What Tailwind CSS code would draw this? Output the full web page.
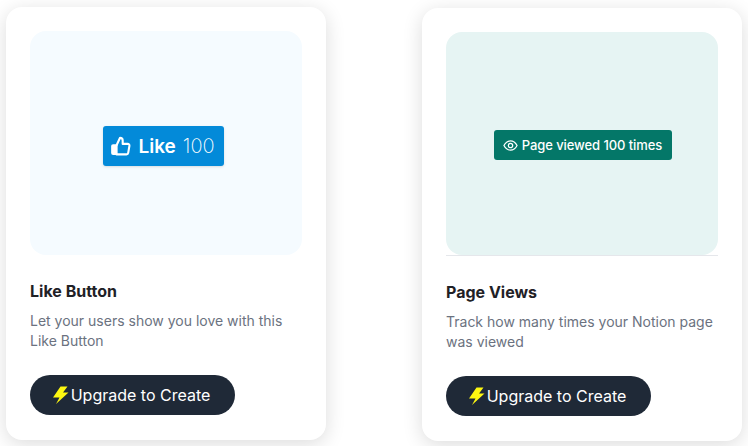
<!DOCTYPE html>
<html>
<head>
<meta charset="utf-8">
<script src="https://cdn.jsdelivr.net/npm/@tailwindcss/browser@4"></script>
</head>
<body class="bg-white overflow-hidden font-['Inter',sans-serif]">
<div class="flex items-start gap-[96px] pl-[6px] pt-[7px] h-[446px] w-[748px] overflow-hidden">
  <div class="w-[320px] h-[433px] bg-white rounded-2xl shadow-[0_4px_20px_rgba(0,0,0,0.14)] p-6 flex flex-col">
    <div class="h-[224px] shrink-0 rounded-2xl bg-[#f5fbff] flex items-center justify-center">
      <div class="w-[121px] h-[40px] mr-[6px] mt-[6px] pr-[1px] bg-[#038ad9] rounded-[3px] shadow-sm flex items-center justify-center gap-[6px] text-white">
        <svg class="w-[21px] h-[21px] mr-[1px] shrink-0" viewBox="0 0 24 24" fill="none" stroke="white" stroke-width="2.4" stroke-linecap="round" stroke-linejoin="round"><path d="M7.5 10.5v10H3.5a1 1 0 0 1-1-1v-8a1 1 0 0 1 1-1z" fill="white"/><path d="M7.5 10.5l4-8.5a3 3 0 0 1 3 3v4h5.7a2 2 0 0 1 2 2.3l-1.4 8a2 2 0 0 1-2 1.7H7.5"/></svg>
        <span class="text-[19px] font-semibold leading-none">Like</span>
        <span class="text-[20px] font-extralight leading-none ml-[1px]">100</span>
      </div>
    </div>
    <h3 class="mt-[26px] text-base leading-[20px] font-bold text-[#1f2126]">Like Button</h3>
    <p class="mt-[10px] text-sm leading-[20px] text-[#6b7280]">Let your users show you love with this Like Button</p>
    <button class="mt-6 w-[205px] h-[40px] pr-[2px] rounded-full bg-[#1f2937] text-white text-base flex items-center justify-center">
      <svg class="w-[18px] h-[18px] shrink-0" viewBox="0 0 18 18"><path d="M7.5 0.5 L14.5 0.5 L10 6.5 H15.5 L3 18 L6.5 11.5 H0 Z" fill="#fdf711"/></svg>
      <span>Upgrade to Create</span>
    </button>
  </div>
  <div class="w-[320px] h-[433px] mt-[1px] bg-white rounded-2xl shadow-[0_4px_20px_rgba(0,0,0,0.14)] p-6 flex flex-col">
    <div class="h-[224px] shrink-0 border-b border-[#e5e7eb]">
      <div class="h-full rounded-2xl bg-[#e6f4f3] flex items-center justify-center">
        <div class="w-[178px] h-[30px] ml-[1px] mt-[3px] bg-[#047768] rounded-[3px] flex items-center justify-center gap-[4px] text-white">
          <svg class="w-[15px] h-[15px] shrink-0" viewBox="0 0 24 24" fill="none" stroke="white" stroke-width="2" stroke-linecap="round" stroke-linejoin="round"><path d="M1.5 12S5.5 4.5 12 4.5 22.5 12 22.5 12 18.5 19.5 12 19.5 1.5 12 1.5 12z"/><circle cx="12" cy="12" r="3.5"/></svg>
          <span class="text-[13px] font-medium tracking-[-0.08px] leading-none">Page viewed 100 times</span>
        </div>
      </div>
    </div>
    <h3 class="mt-[26px] text-base leading-[20px] font-bold text-[#1f2126]">Page Views</h3>
    <p class="mt-[10px] text-sm leading-[20px] text-[#6b7280]">Track how many times your Notion page was viewed</p>
    <button class="mt-6 w-[205px] h-[40px] pr-[2px] rounded-full bg-[#1f2937] text-white text-base flex items-center justify-center">
      <svg class="w-[18px] h-[18px] shrink-0" viewBox="0 0 18 18"><path d="M7.5 0.5 L14.5 0.5 L10 6.5 H15.5 L3 18 L6.5 11.5 H0 Z" fill="#fdf711"/></svg>
      <span>Upgrade to Create</span>
    </button>
  </div>
</div>
</body>
</html>
